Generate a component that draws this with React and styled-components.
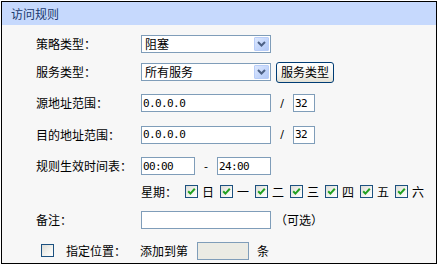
import React from 'react';
import styled, { createGlobalStyle } from 'styled-components';

const Global = createGlobalStyle`
  html, body { margin: 0; padding: 0; background: #ffffff; }
  body {
    font-family: "Noto Sans CJK SC", "Noto Sans", sans-serif;
    font-size: 12px;
    color: #000;
  }
`;

const Frame = styled.div`
  box-sizing: border-box;
  margin: 1px 0 0 1px;
  width: 436px;
  height: 263px;
  border: 1px solid #000;
  background: #f7f7f7;
  display: flex;
  flex-direction: column;
`;

const Header = styled.div`
  height: 23px;
  background: #c6d9fd;
  color: #1a3a6e;
  display: flex;
  align-items: center;
  padding-left: 9px;
  font-size: 12px;
  line-height: 1;
`;

const Body = styled.div`
  display: flex;
  flex-direction: column;
  padding: 3px 0 0 34px;
`;

const Row = styled.div`
  height: ${(p) => p.$h}px;
  display: flex;
  align-items: center;
  line-height: 1;
`;

const Label = styled.div`
  width: 105px;
  flex: none;
  white-space: nowrap;
`;

const Select = styled.div`
  box-sizing: border-box;
  width: 130px;
  height: 18px;
  border: 1px solid #7f9db9;
  background: #fff;
  display: flex;
  align-items: center;
  justify-content: space-between;
  padding-left: 3px;
  font-size: 12px;
`;

const DropBtn = styled.span`
  box-sizing: border-box;
  width: 15px;
  height: 14px;
  margin-right: 1px;
  border: 1px solid #b8cdf8;
  border-radius: 1px;
  background: linear-gradient(135deg, #dde8fe 0%, #c2d5fb 60%, #b3c8f6 100%);
  display: flex;
  align-items: center;
  justify-content: center;
`;

const Button = styled.button`
  box-sizing: border-box;
  margin-left: 5px;
  width: 58px;
  height: 21px;
  padding: 0;
  border: 1px solid #003c74;
  border-radius: 3px;
  background: linear-gradient(180deg, #ffffff 0%, #f4f3ee 60%, #e3e1d6 100%);
  font-family: "Noto Sans CJK SC", "Noto Sans", sans-serif;
  font-size: 12px;
  color: #000;
  line-height: 1;
`;

const Input = styled.input`
  box-sizing: border-box;
  width: ${(p) => p.$w}px;
  height: 18px;
  margin: 0;
  padding: 0 0 0 1px;
  border: 1px solid #7f9db9;
  background: ${(p) => (p.$disabled ? '#ebebe4' : '#ffffff')};
  font-family: "DejaVu Sans Mono", "Liberation Mono", monospace;
  font-size: 11px;
  letter-spacing: -0.6px;
  color: #000;
  outline: none;
`;

const Sep = styled.span`
  width: 22px;
  flex: none;
  text-align: center;
  font-family: "DejaVu Sans", sans-serif;
  font-size: 11px;
`;

const Note = styled.span`
  margin-left: ${(p) => p.$ml || 0}px;
  white-space: nowrap;
`;

const WeekLabel = styled.span`
  width: 44px;
  flex: none;
`;

const Day = styled.span`
  width: 35px;
  flex: none;
  display: flex;
  align-items: center;
  gap: 4px;
`;

const Box = styled.span`
  box-sizing: border-box;
  width: 13px;
  height: 13px;
  flex: none;
  border: 1px solid #1c5180;
  background: linear-gradient(135deg, #dcdcd7 0%, #f2f2ee 55%, #ffffff 100%);
  display: flex;
  align-items: center;
  justify-content: center;
`;

const PosLabel = styled.div`
  width: 99px;
  flex: none;
  display: flex;
  align-items: center;
  padding-left: 5px;
  gap: 12px;
  white-space: nowrap;
`;

const AddText = styled.span`
  width: 57px;
  flex: none;
`;

function Check({ checked }) {
  return (
    <Box>
      {checked && (
        <svg width="9" height="9" viewBox="0 0 9 9">
          <polyline
            points="1.2,4.2 3.4,6.6 7.8,1.8"
            fill="none"
            stroke="#21a121"
            strokeWidth="2"
          />
        </svg>
      )}
    </Box>
  );
}

function Chevron() {
  return (
    <svg width="9" height="6" viewBox="0 0 9 6">
      <polyline points="1,1 4.5,4.5 8,1" fill="none" stroke="#4d6185" strokeWidth="2" />
    </svg>
  );
}

const days = ['日', '一', '二', '三', '四', '五', '六'];

export default function App() {
  return (
    <>
      <Global />
      <Frame>
        <Header>访问规则</Header>
        <Body>
          <Row $h={31}>
            <Label>策略类型：</Label>
            <Select>
              阻塞
              <DropBtn><Chevron /></DropBtn>
            </Select>
          </Row>
          <Row $h={26}>
            <Label>服务类型：</Label>
            <Select>
              所有服务
              <DropBtn><Chevron /></DropBtn>
            </Select>
            <Button>服务类型</Button>
          </Row>
          <Row $h={36}>
            <Label>源地址范围：</Label>
            <Input $w={130} readOnly value="0.0.0.0" />
            <Sep>/</Sep>
            <Input $w={22} readOnly value="32" />
          </Row>
          <Row $h={27}>
            <Label>目的地址范围：</Label>
            <Input $w={130} readOnly value="0.0.0.0" />
            <Sep>/</Sep>
            <Input $w={22} readOnly value="32" />
          </Row>
          <Row $h={36}>
            <Label>规则生效时间表：</Label>
            <Input $w={54} readOnly value="00:00" />
            <Sep>-</Sep>
            <Input $w={54} readOnly value="24:00" />
          </Row>
          <Row $h={15}>
            <Label />
            <WeekLabel>星期：</WeekLabel>
            {days.map((d) => (
              <Day key={d}>
                <Check checked />
                {d}
              </Day>
            ))}
          </Row>
          <Row $h={42}>
            <Label>备注：</Label>
            <Input $w={130} readOnly value="" />
            <Note $ml={4}>（可选）</Note>
          </Row>
          <Row $h={19}>
            <PosLabel>
              <Check />
              指定位置：
            </PosLabel>
            <AddText>添加到第</AddText>
            <Input $w={52} $disabled readOnly value="" />
            <Note $ml={8}>条</Note>
          </Row>
        </Body>
      </Frame>
    </>
  );
}
